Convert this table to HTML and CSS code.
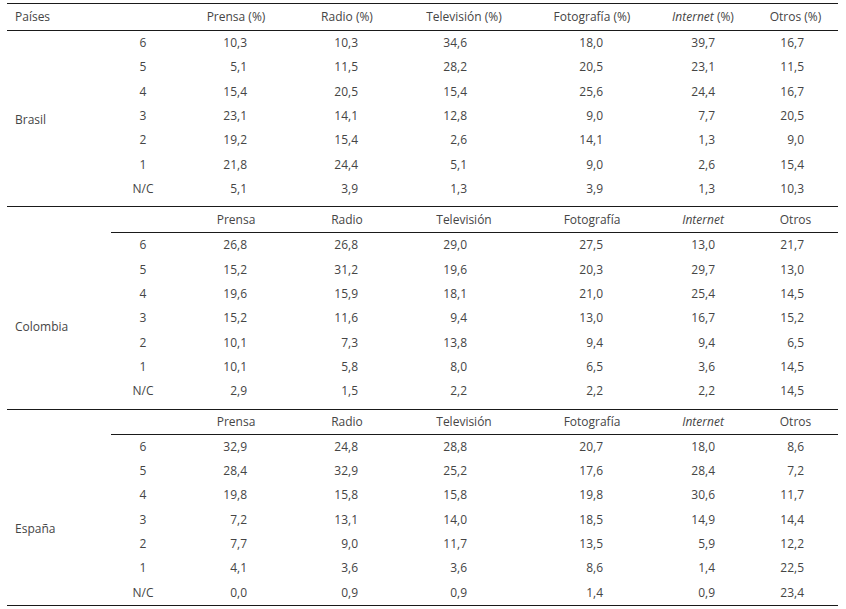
FILE: index.html
```html
<!DOCTYPE html>
<html lang="es">
<head>
<meta charset="utf-8">
<title>Tabla</title>
<link rel="stylesheet" href="styles.css">
</head>
<body>
<table class="data">
  <colgroup>
    <col class="w-country"><col class="w-label"><col class="w-pr"><col class="w-ra"><col class="w-tv"><col class="w-fo"><col class="w-in"><col class="w-ot">
  </colgroup>
  <tbody class="group first">
    <tr class="head">
      <th class="country-head">Países</th><th class="blank"></th>
      <th>Prensa (%)</th><th>Radio (%)</th><th>Televisión (%)</th><th>Fotografía (%)</th><th><i>Internet</i> (%)</th><th>Otros (%)</th>
    </tr>
    <tr><td class="country" rowspan="7">Brasil</td><td class="lbl">6</td><td>10,3</td><td>10,3</td><td>34,6</td><td>18,0</td><td>39,7</td><td>16,7</td></tr>
    <tr><td class="lbl">5</td><td>5,1</td><td>11,5</td><td>28,2</td><td>20,5</td><td>23,1</td><td>11,5</td></tr>
    <tr><td class="lbl">4</td><td>15,4</td><td>20,5</td><td>15,4</td><td>25,6</td><td>24,4</td><td>16,7</td></tr>
    <tr><td class="lbl">3</td><td>23,1</td><td>14,1</td><td>12,8</td><td>9,0</td><td>7,7</td><td>20,5</td></tr>
    <tr><td class="lbl">2</td><td>19,2</td><td>15,4</td><td>2,6</td><td>14,1</td><td>1,3</td><td>9,0</td></tr>
    <tr><td class="lbl">1</td><td>21,8</td><td>24,4</td><td>5,1</td><td>9,0</td><td>2,6</td><td>15,4</td></tr>
    <tr class="last"><td class="lbl">N/C</td><td>5,1</td><td>3,9</td><td>1,3</td><td>3,9</td><td>1,3</td><td>10,3</td></tr>
  </tbody>
  <tbody class="group second">
    <tr class="head sub">
      <th class="country-head"></th><th></th>
      <th>Prensa</th><th>Radio</th><th>Televisión</th><th>Fotografía</th><th><i>Internet</i></th><th>Otros</th>
    </tr>
    <tr><td class="country" rowspan="7">Colombia</td><td class="lbl">6</td><td>26,8</td><td>26,8</td><td>29,0</td><td>27,5</td><td>13,0</td><td>21,7</td></tr>
    <tr><td class="lbl">5</td><td>15,2</td><td>31,2</td><td>19,6</td><td>20,3</td><td>29,7</td><td>13,0</td></tr>
    <tr><td class="lbl">4</td><td>19,6</td><td>15,9</td><td>18,1</td><td>21,0</td><td>25,4</td><td>14,5</td></tr>
    <tr><td class="lbl">3</td><td>15,2</td><td>11,6</td><td>9,4</td><td>13,0</td><td>16,7</td><td>15,2</td></tr>
    <tr><td class="lbl">2</td><td>10,1</td><td>7,3</td><td>13,8</td><td>9,4</td><td>9,4</td><td>6,5</td></tr>
    <tr><td class="lbl">1</td><td>10,1</td><td>5,8</td><td>8,0</td><td>6,5</td><td>3,6</td><td>14,5</td></tr>
    <tr class="last"><td class="lbl">N/C</td><td>2,9</td><td>1,5</td><td>2,2</td><td>2,2</td><td>2,2</td><td>14,5</td></tr>
  </tbody>
  <tbody class="group final">
    <tr class="head sub">
      <th class="country-head"></th><th></th>
      <th>Prensa</th><th>Radio</th><th>Televisión</th><th>Fotografía</th><th><i>Internet</i></th><th>Otros</th>
    </tr>
    <tr><td class="country" rowspan="7">España</td><td class="lbl">6</td><td>32,9</td><td>24,8</td><td>28,8</td><td>20,7</td><td>18,0</td><td>8,6</td></tr>
    <tr><td class="lbl">5</td><td>28,4</td><td>32,9</td><td>25,2</td><td>17,6</td><td>28,4</td><td>7,2</td></tr>
    <tr><td class="lbl">4</td><td>19,8</td><td>15,8</td><td>15,8</td><td>19,8</td><td>30,6</td><td>11,7</td></tr>
    <tr><td class="lbl">3</td><td>7,2</td><td>13,1</td><td>14,0</td><td>18,5</td><td>14,9</td><td>14,4</td></tr>
    <tr><td class="lbl">2</td><td>7,7</td><td>9,0</td><td>11,7</td><td>13,5</td><td>5,9</td><td>12,2</td></tr>
    <tr><td class="lbl">1</td><td>4,1</td><td>3,6</td><td>3,6</td><td>8,6</td><td>1,4</td><td>22,5</td></tr>
    <tr class="last"><td class="lbl">N/C</td><td>0,0</td><td>0,9</td><td>0,9</td><td>1,4</td><td>0,9</td><td>23,4</td></tr>
  </tbody>
</table>
</body>
</html>
```
FILE: styles.css
```css
html, body {
  margin: 0;
  padding: 0;
  background: #ffffff;
}

body {
  padding: 3px 0 0 7px;
  font-family: "Open Sans", "Liberation Sans", sans-serif;
  font-size: 12px;
  font-weight: 400;
  color: #454545;
}

.data {
  width: 831px;
  table-layout: fixed;
  border-collapse: collapse;
  border-top: 1px solid #1a1a1a;
  border-bottom: 1px solid #1a1a1a;
}

.w-country { width: 104px; }
.w-label { width: 64px; }
.w-pr { width: 122px; }
.w-ra { width: 100px; }
.w-tv { width: 134px; }
.w-fo { width: 122px; }
.w-in { width: 100px; }
.w-ot { width: 85px; }

.group + .group {
  border-top: 1px solid #1a1a1a;
}

th, td {
  padding: 0;
}

.head th {
  font-weight: 400;
  text-align: center;
  height: 25px;
  line-height: 16px;
  border-bottom: 1px solid #1a1a1a;
}

.first .head th {
  height: 26px;
}

.final .head th {
  height: 24px;
}

.head th.country-head {
  text-align: left;
  padding-left: 8px;
}

.sub th.country-head {
  border-bottom: none;
}

.head i {
  font-style: italic;
}

td {
  height: 24.33px;
  line-height: 24px;
  text-align: right;
  vertical-align: top;
}

tr.last td {
  height: 29.33px;
}

.final tr.last td {
  height: 24.33px;
}

td.lbl {
  text-align: center;
}

td.country {
  text-align: left;
  padding: 2px 0 0 8px;
  vertical-align: middle;
  line-height: 16px;
}

.second td.country {
  padding-top: 12px;
}

.final td.country {
  padding-top: 20px;
}

td:nth-last-child(6) { padding-right: 50px; }
td:nth-last-child(5) { padding-right: 39px; }
td:nth-last-child(4) { padding-right: 64px; }
td:nth-last-child(3) { padding-right: 50px; }
td:nth-last-child(2) { padding-right: 38px; }
td:nth-last-child(1) { padding-right: 34px; }
```
